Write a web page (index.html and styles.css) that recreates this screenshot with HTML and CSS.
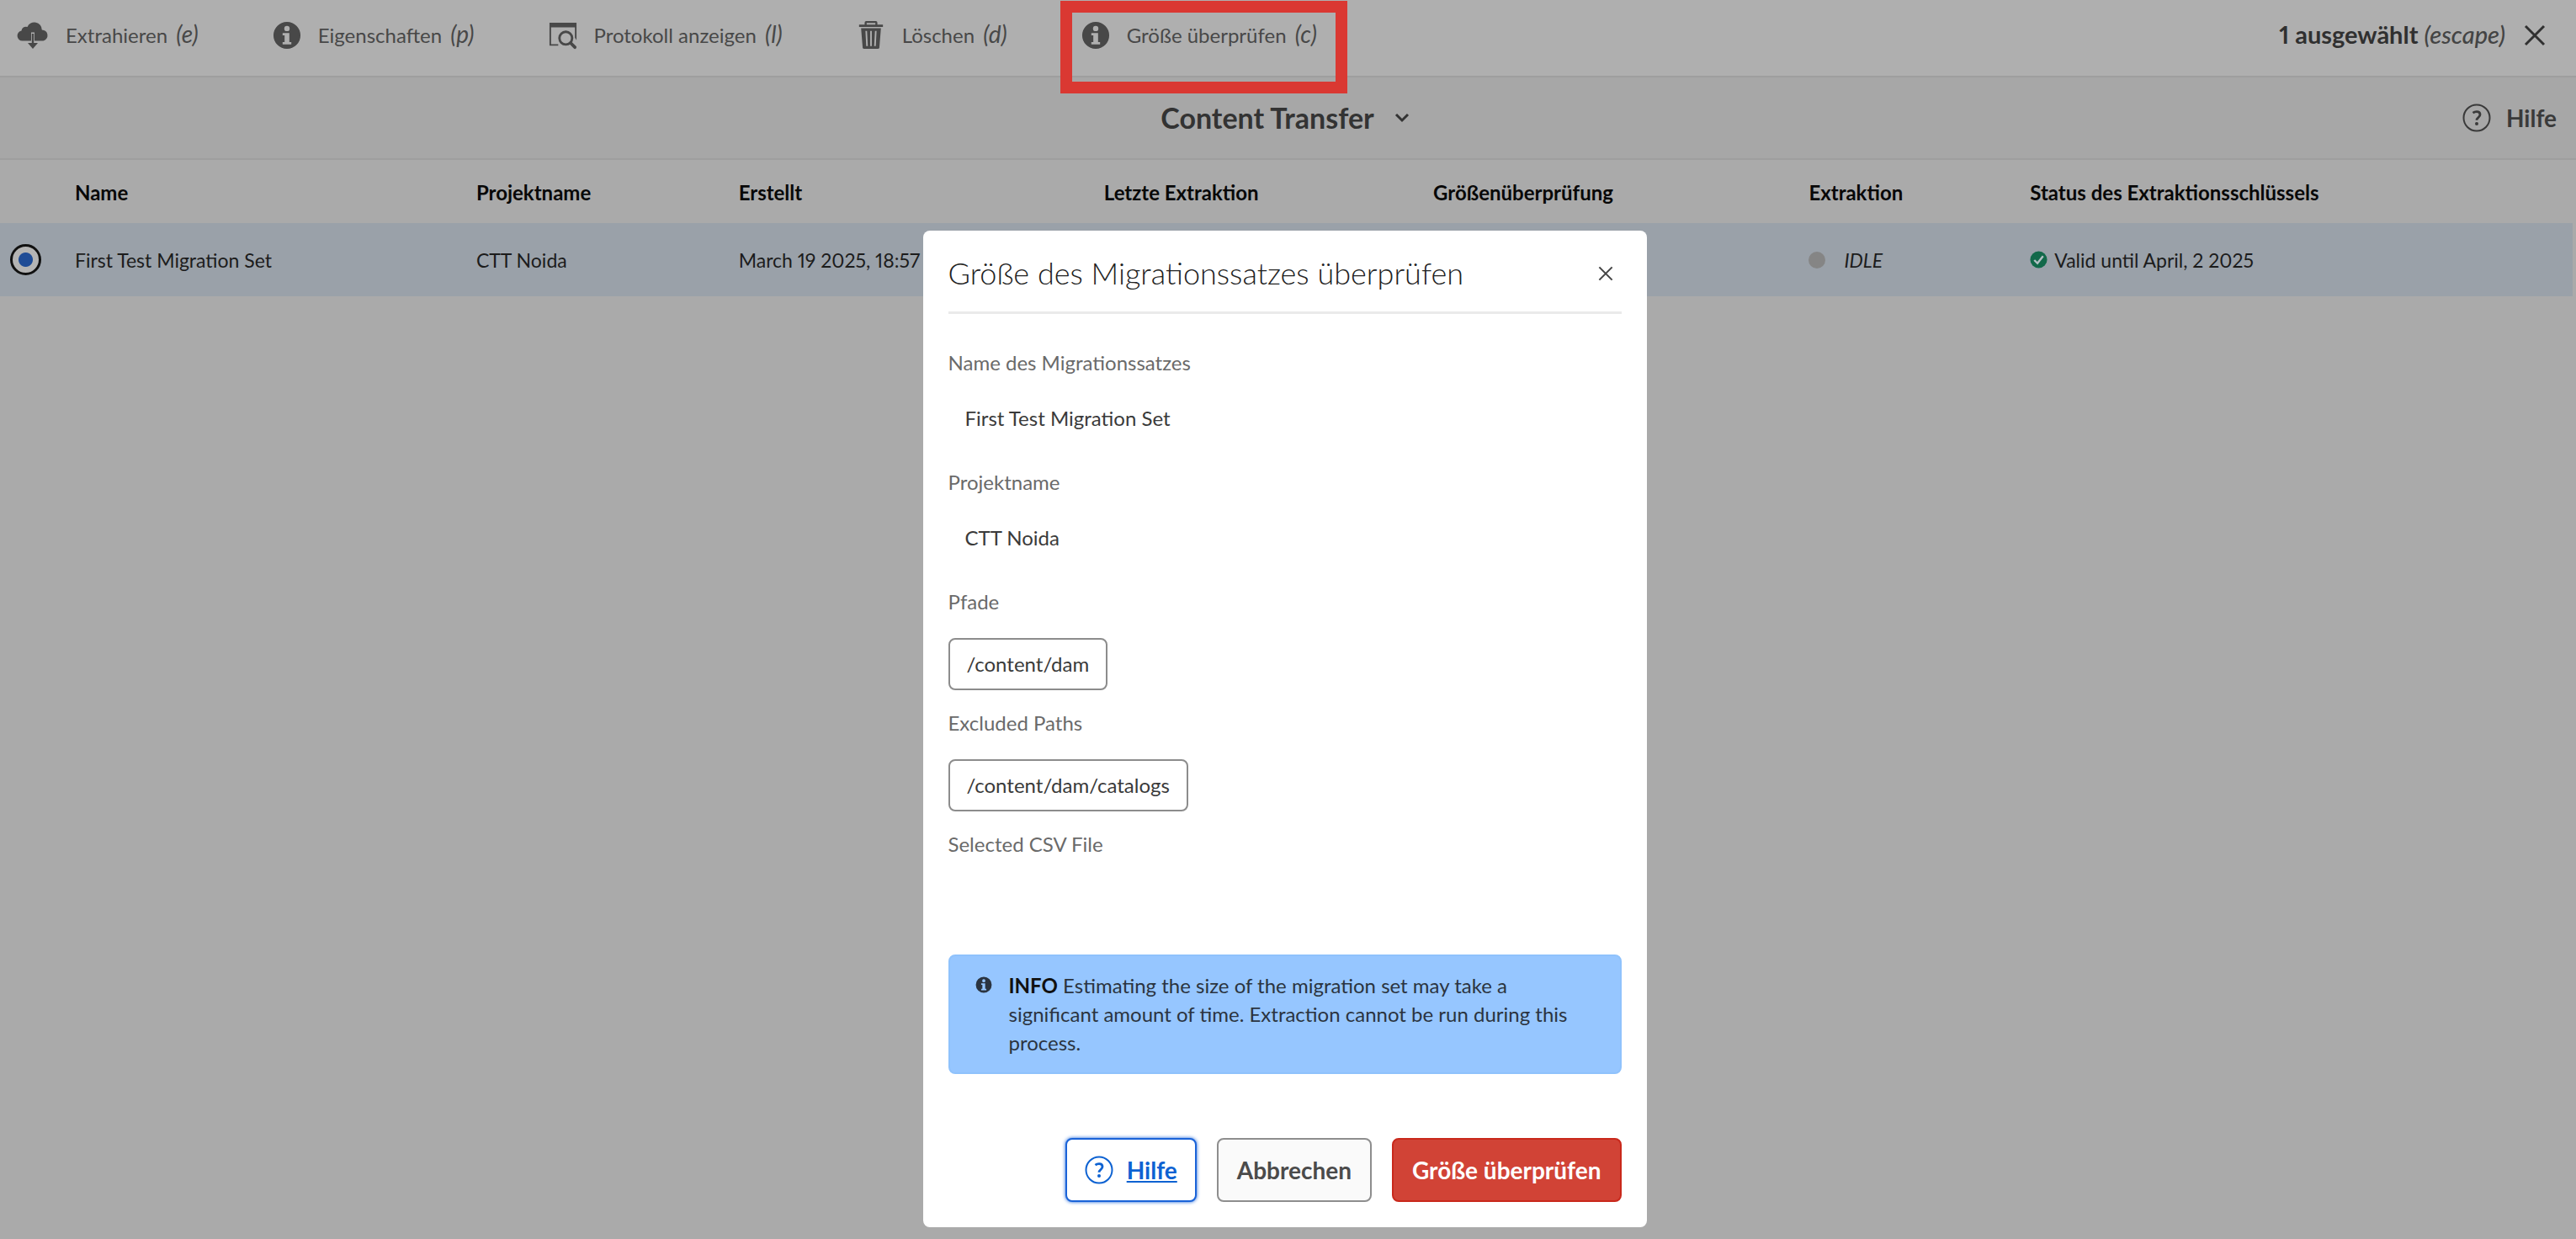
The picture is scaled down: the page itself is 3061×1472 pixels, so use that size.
FILE: index.html
```html
<!DOCTYPE html>
<html lang="de">
<head>
<meta charset="utf-8">
<title>Content Transfer</title>
<link rel="stylesheet" href="styles.css">
</head>
<body>
<svg class="sprite" aria-hidden="true">
  <symbol id="i-info" viewBox="0 0 36 36">
    <path fill="currentColor" fill-rule="evenodd" d="M18 1a17 17 0 1 0 0 34a17 17 0 0 0 0-34zM18 6a3.4 3.4 0 1 1 0 6.800a3.400 3.400 0 0 1 0-6.800zM12.500 15H21v11.500h2.500V29.500h-11V26.500H15V18h-2.500z"/>
  </symbol>
  <symbol id="i-cloud" viewBox="0 0 38 34">
    <path fill="currentColor" d="M6.500 23.500a6 6 0 0 1-1-11.900a5.200 5.200 0 0 1 7-4.600a9 9 0 0 1 17.300 3.500a6.600 6.600 0 0 1 1.700 13H21V13.500h-4v10z"/>
    <path fill="currentColor" d="M17.800 15h2.400v11h4.800L19 33l-6-7h4.800z"/>
  </symbol>
  <symbol id="i-log" viewBox="0 0 36 36">
    <path fill="currentColor" d="M1 2h34v22l-2-3V8H3v21h9v2H1z"/>
    <circle cx="21.500" cy="21.500" r="8" fill="none" stroke="currentColor" stroke-width="3"/>
    <path stroke="currentColor" stroke-width="4" stroke-linecap="round" d="M27.500 27.500l5.500 5.500"/>
  </symbol>
  <symbol id="i-trash" viewBox="0 0 32 36">
    <path fill="currentColor" fill-rule="evenodd" d="M10 0h12q2 0 2 2v2.500h7v3H1v-3h7V2q0-2 2-2zM10.500 2.500v2h11v-2zM3.500 9h25l-2 24.500q-.2 1.500-2 1.500h-17q-1.800 0-2-1.500zM9 12.500l1 19h2l-1-19zM15 12.500v19h2v-19zM21 12.500l-1 19h2l1-19z"/>
  </symbol>
  <symbol id="i-close" viewBox="0 0 26 26">
    <path fill="none" stroke="currentColor" stroke-width="3" d="M2 2l22 22M24 2L2 24"/>
  </symbol>
  <symbol id="i-help" viewBox="0 0 34 34">
    <circle cx="17" cy="17" r="15.500" fill="none" stroke="currentColor" stroke-width="2"/>
    <path fill="none" stroke="currentColor" stroke-width="2.800" d="M12.500 11.200q2-1.500 4.500-1.500q4 0 4 3.300q0 1.800-2 3.500t-2 3.200"/>
    <circle cx="17" cy="24" r="2" fill="currentColor"/>
  </symbol>
  <symbol id="i-chevron" viewBox="0 0 18 12">
    <path fill="none" stroke="currentColor" stroke-width="3" d="M2 2l7 7l7-7"/>
  </symbol>
  <symbol id="i-check" viewBox="0 0 22 22">
    <circle cx="11" cy="11" r="10.500" fill="#12694a"/>
    <path fill="none" stroke="#b4bfc4" stroke-width="2.500" d="M5.500 11.500l4 4l7-9"/>
  </symbol>
</svg>

<header class="toolbar">
  <button class="action" type="button"><svg class="icon icon-wide"><use href="#i-cloud"/></svg><span>Extrahieren <i>(e)</i></span></button>
  <button class="action" type="button"><svg class="icon"><use href="#i-info"/></svg><span>Eigenschaften <i>(p)</i></span></button>
  <button class="action" type="button"><svg class="icon"><use href="#i-log"/></svg><span>Protokoll anzeigen <i>(l)</i></span></button>
  <button class="action" type="button"><svg class="icon"><use href="#i-trash"/></svg><span>Löschen <i>(d)</i></span></button>
  <button class="action highlighted" type="button"><svg class="icon"><use href="#i-info"/></svg><span>Größe überprüfen <i>(c)</i></span></button>
  <button class="selection" type="button"><span>1 ausgewählt <i>(escape)</i></span><svg class="icon-close"><use href="#i-close"/></svg></button>
</header>

<nav class="titlebar">
  <button class="page-title" type="button">Content Transfer<svg class="icon-chevron"><use href="#i-chevron"/></svg></button>
  <a class="help-link" href="#hilfe"><svg class="icon"><use href="#i-help"/></svg>Hilfe</a>
</nav>

<main class="content">
  <table class="sets">
    <colgroup>
      <col class="c-select"><col class="c-name"><col class="c-project"><col class="c-created"><col class="c-last"><col class="c-size"><col class="c-extraction"><col>
    </colgroup>
    <thead>
      <tr><th></th><th>Name</th><th>Projektname</th><th>Erstellt</th><th>Letzte Extraktion</th><th>Größenüberprüfung</th><th>Extraktion</th><th>Status des Extraktionsschlüssels</th></tr>
    </thead>
    <tbody>
      <tr>
        <td><input class="radio" type="radio" name="set" checked aria-label="First Test Migration Set"></td>
        <td>First Test Migration Set</td>
        <td>CTT Noida</td>
        <td>March 19 2025, 18:57</td>
        <td></td>
        <td></td>
        <td><span class="state"><span class="dot"></span><i>IDLE</i></span></td>
        <td><span class="valid"><svg class="icon-check"><use href="#i-check"/></svg>Valid until April, 2 2025</span></td>
      </tr>
    </tbody>
  </table>
</main>

<div class="overlay">
  <section class="dialog" role="dialog" aria-labelledby="dialog-title">
    <header class="dialog-head">
      <h2 id="dialog-title">Größe des Migrationssatzes überprüfen</h2>
      <button class="dialog-close" type="button" aria-label="Schließen"><svg><use href="#i-close"/></svg></button>
    </header>
    <dl class="fields">
      <div class="field"><dt>Name des Migrationssatzes</dt><dd>First Test Migration Set</dd></div>
      <div class="field"><dt>Projektname</dt><dd>CTT Noida</dd></div>
      <div class="field field-tall"><dt>Pfade</dt><dd class="chip">/content/dam</dd></div>
      <div class="field field-tall"><dt>Excluded Paths</dt><dd class="chip">/content/dam/catalogs</dd></div>
      <div class="field field-tall"><dt>Selected CSV File</dt></div>
    </dl>
    <div class="alert" role="status">
      <svg class="alert-icon"><use href="#i-info"/></svg>
      <p><strong>INFO</strong> Estimating the size of the migration set may take a significant amount of time. Extraction cannot be run during this process.</p>
    </div>
    <footer class="dialog-foot">
      <a class="btn btn-help" href="#hilfe"><svg class="icon"><use href="#i-help"/></svg><span>Hilfe</span></a>
      <button class="btn" type="button">Abbrechen</button>
      <button class="btn btn-warn" type="button">Größe überprüfen</button>
    </footer>
  </section>
</div>
</body>
</html>
```
FILE: styles.css
```css
* { box-sizing: border-box; }

body {
  margin: 0;
  min-height: 100vh;
  background: #aaa;
  color: #1c1c1c;
  font: 24px/28px Lato, "Open Sans", sans-serif;
  font-variant-numeric: proportional-nums;
}

button {
  margin: 0;
  padding: 0;
  border: 0;
  background: none;
  color: inherit;
  font: inherit;
  font-variant-numeric: inherit;
}

svg { flex: none; display: block; }
.sprite { display: none; }
.icon { width: 34px; height: 34px; }
.icon-wide { width: 38px; }

/* Toolbar */
.toolbar {
  display: flex;
  align-items: center;
  gap: 88px;
  height: 92px;
  padding: 0 36px 6px 20px;
  background: #afafaf;
  border-bottom: 2px solid #9e9e9e;
  color: #484848;
}
.action {
  position: relative;
  display: flex;
  align-items: center;
  gap: 20px;
  height: 34px;
  white-space: nowrap;
}
.action span, .selection span { padding-bottom: 2px; }
.action i { margin-left: 4px; font-size: 28px; line-height: 28px; }
.highlighted::after {
  content: "";
  position: absolute;
  inset: -24px -36px -52px -25px;
  border: 14px solid #da3832;
}
.selection {
  display: flex;
  align-items: center;
  gap: 22px;
  margin-left: auto;
  color: #303030;
  font-size: 29px;
  font-weight: 700;
  white-space: nowrap;
}
.selection i { color: #444; font-weight: 500; }
.icon-close { width: 26px; height: 26px; }

/* Title bar */
.titlebar {
  display: grid;
  grid-template-columns: 1fr auto 1fr;
  align-items: center;
  height: 98px;
  padding: 0 23px 0 16px;
  background: #a7a7a7;
  border-bottom: 2px solid #9e9e9e;
  color: #333;
}
.page-title {
  grid-column: 2;
  display: flex;
  align-items: center;
  gap: 24px;
  font-size: 34px;
  line-height: 40px;
  font-weight: 700;
}
.icon-chevron { width: 18px; height: 12px; }
.help-link {
  justify-self: end;
  display: flex;
  align-items: center;
  gap: 18px;
  color: #3a3a3a;
  font-size: 28px;
  font-weight: 700;
  text-decoration: none;
}

/* Migration sets */
.content { padding-right: 4px; }
.sets {
  width: 100%;
  table-layout: fixed;
  border-collapse: collapse;
  text-align: left;
  white-space: nowrap;
}
.c-select { width: 89px; }
.c-name { width: 15.6%; }
.c-project { width: 10.2%; }
.c-created { width: 14.2%; }
.c-last { width: 12.8%; }
.c-size { width: 14.6%; }
.c-extraction { width: 8.6%; }
.sets th, .sets td { padding: 0; }
.sets th { height: 75px; padding-top: 3px; color: #080808; font-weight: 700; }
.sets td { height: 87px; background: #9aa1a9; font-size: 23px; }
.radio {
  appearance: none;
  display: block;
  width: 37px;
  height: 37px;
  margin: 0 0 0 12px;
  border: 3px solid #111;
  border-radius: 50%;
  background: radial-gradient(circle, #1f4c96 8px, #b4b4b4 9px);
}
.state, .valid { display: flex; align-items: center; }
.state { gap: 22px; }
.dot { width: 20px; height: 20px; border-radius: 50%; background: #858585; }
.valid { gap: 8px; }
.icon-check { width: 21px; height: 21px; }

/* Dialog */
.overlay {
  position: fixed;
  inset: 0 8px 0 0;
  display: flex;
  justify-content: center;
  align-items: flex-start;
  padding-top: 274px;
}
.dialog {
  width: 860px;
  padding: 0 30px 30px;
  border-radius: 8px;
  background: #fff;
}
.dialog-head {
  display: flex;
  justify-content: space-between;
  align-items: center;
  height: 99px;
  padding-top: 4px;
  border-bottom: 3px solid #eaeaea;
}
.dialog-head h2 {
  margin: 0;
  color: #222;
  font-size: 36px;
  line-height: 44px;
  font-weight: 300;
}
.dialog-close { padding: 2px 10px 0; color: #444; }
.dialog-close svg { width: 18px; height: 18px; }
.fields { margin: 0; padding: 44px 0 1px; }
.field { height: 142px; }
.field-tall { height: 144px; }
.field dt { color: #6a6a6a; }
.field dd { margin: 38px 0 0 20px; color: #3a3a3a; }
.field .chip {
  width: fit-content;
  margin: 29px 0 0;
  padding: 15px 20px;
  border: 2px solid #8c8c8c;
  border-radius: 8px;
}
.alert {
  display: flex;
  gap: 20px;
  padding: 18px 30px;
  border: 2px solid #8fc2fc;
  border-radius: 8px;
  background: #96c6ff;
  color: #2b3440;
  line-height: 34px;
}
.alert-icon { width: 20px; height: 20px; margin-top: 6px; }
.alert p { margin: 0; }
.alert strong { color: #111; }
.dialog-foot {
  display: flex;
  justify-content: flex-end;
  gap: 24px;
  padding-top: 76px;
}
.btn {
  display: flex;
  align-items: center;
  height: 76px;
  padding: 0 22px;
  border: 2px solid #8e8e8e;
  border-radius: 8px;
  background: #fafafa;
  color: #4b4b4b;
  font-size: 28px;
  font-weight: 700;
}
.btn-help {
  gap: 16px;
  padding: 0 21px;
  border-color: #1a63d8;
  background: #fff;
  box-shadow: 0 0 4px #1a63d8;
  color: #0d62d2;
  text-decoration: none;
}
.btn-help span { text-decoration: underline; }
.btn-warn { border-color: #c9281b; background: #d14336; color: #fff; }
```
